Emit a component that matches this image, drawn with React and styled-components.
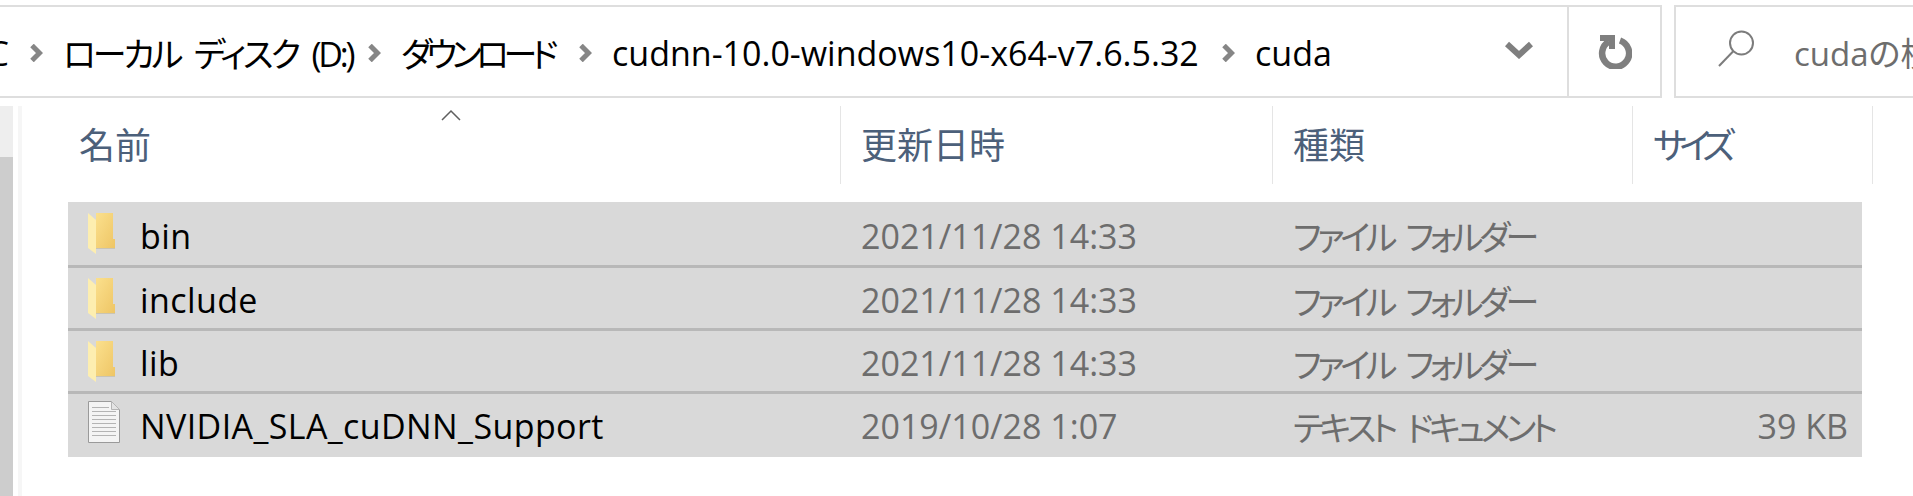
import styled, { createGlobalStyle } from "styled-components";

const GlobalStyle = createGlobalStyle`
  html, body {
    margin: 0;
    padding: 0;
    background: #fff;
  }
  body {
    font-family: "Open Sans", "Noto Sans CJK JP", sans-serif;
    font-feature-settings: "palt";
  }
`;

const crumbs = [
  { label: "ローカル ディスク (D:)", width: 304, tracking: -3.2 },
  { label: "ダウンロード", width: 177, tracking: -5.6 },
  { label: "cudnn-10.0-windows10-x64-v7.6.5.32", width: 609, tracking: 0 },
  { label: "cuda", width: 80, tracking: 0 },
];

const files = [
  { name: "bin", date: "2021/11/28 14:33", type: "ファイル フォルダー", folder: true, tall: true },
  { name: "include", date: "2021/11/28 14:33", type: "ファイル フォルダー", folder: true },
  { name: "lib", date: "2021/11/28 14:33", type: "ファイル フォルダー", folder: true },
  { name: "NVIDIA_SLA_cuDNN_Support", date: "2019/10/28 1:07", type: "テキスト ドキュメント", size: "39 KB", tall: true },
];

const Chevron = () => (
  <ChevronSvg width="14" height="18" viewBox="0 0 14 18">
    <path d="M3 1.5L10.5 9 3 16.5" fill="none" stroke="#868686" strokeWidth="5" />
  </ChevronSvg>
);

const FolderIcon = () => (
  <svg width="28" height="41" viewBox="0 0 28 41">
    <defs>
      <linearGradient id="back" x1="0" y1="0" x2="1" y2="1">
        <stop offset="0" stopColor="#fbe08d" />
        <stop offset="1" stopColor="#eec565" />
      </linearGradient>
    </defs>
    <path d="M8 0h17v26l2 0v9H8z" fill="url(#back)" />
    <path d="M0 0l8 7v34l-8-6z" fill="#fdeeb0" />
    <path d="M8 35h19v1H8z" fill="#c9c4b4" />
  </svg>
);

const DocIcon = () => (
  <DocSvg width="32" height="42" viewBox="0 0 32 42">
    <path d="M.5.5h23l8 8v33H.5z" fill="#f4f4f4" stroke="#9a9a9a" />
    <path d="M23.5.5v8h8z" fill="#e4e4e4" stroke="#b5b5b5" />
    <path
      d="M4 6.5h17M4 10.5h24M4 14.5h24M4 18.5h24M4 22.5h24M4 26.5h24M4 30.5h24M4 34.5h24"
      stroke="#b4b4b4"
    />
  </DocSvg>
);

const RefreshIcon = () => (
  <svg width="34" height="34" viewBox="0 0 34 34">
    <path d="M11 6.5A13.5 13.5 0 1 0 22 5.5" fill="none" stroke="#7f7f7f" strokeWidth="6.5" />
    <path d="M2 0h15v14h-6V6H2z" fill="#7f7f7f" />
  </svg>
);

const SearchIcon = () => (
  <SearchSvg width="38" height="38" viewBox="0 0 38 38">
    <circle cx="24.5" cy="13" r="11.5" fill="none" stroke="#7c7c7c" strokeWidth="2" />
    <path d="M16.5 21L2 36" stroke="#7c7c7c" strokeWidth="2" />
  </SearchSvg>
);

export default function App() {
  return (
    <>
      <GlobalStyle />
      <Page>
        <TopBar>
          <AddressBar>
            <Breadcrumbs>
              <RootCrumb>PC</RootCrumb>
              {crumbs.map((crumb) => (
                <Crumb key={crumb.label}>
                  <Chevron />
                  <CrumbLabel $width={crumb.width} $tracking={crumb.tracking}>
                    {crumb.label}
                  </CrumbLabel>
                </Crumb>
              ))}
            </Breadcrumbs>
            <DropButton>
              <svg width="28" height="18" viewBox="0 0 28 18">
                <path d="M2 3l12 11L26 3" fill="none" stroke="#7f7f7f" strokeWidth="6" />
              </svg>
            </DropButton>
            <RefreshButton>
              <RefreshIcon />
            </RefreshButton>
          </AddressBar>
          <SearchBox>
            <SearchIcon />
            <SearchText>cudaの検索</SearchText>
          </SearchBox>
        </TopBar>
        <Main>
          <Sidebar />
          <Gutter />
          <List>
            <HeaderRow>
              <HeaderCell $width={773} $pad={11}>名前</HeaderCell>
              <HeaderCell $width={432} $pad={20}>更新日時</HeaderCell>
              <HeaderCell $width={360} $pad={20}>種類</HeaderCell>
              <HeaderCell $width={240} $pad={20} $tracking={-7.7}>サイズ</HeaderCell>
              <SortArrow width="20" height="12" viewBox="0 0 20 12">
                <path d="M1 11l9-9 9 9" fill="none" stroke="#5f5f5f" strokeWidth="1.5" />
              </SortArrow>
            </HeaderRow>
            <Rows>
              {files.map((file) => (
                <Row key={file.name} $tall={file.tall}>
                  <NameCell>
                    <IconSlot>{file.folder ? <FolderIcon /> : <DocIcon />}</IconSlot>
                    <FileName>{file.name}</FileName>
                  </NameCell>
                  <DetailCell $pad={20}>{file.date}</DetailCell>
                  <DetailCell $pad={20}>
                    <KanaText>{file.type}</KanaText>
                  </DetailCell>
                  <SizeCell>{file.size}</SizeCell>
                </Row>
              ))}
            </Rows>
          </List>
        </Main>
      </Page>
    </>
  );
}

const Page = styled.div`
  width: 1913px;
  height: 496px;
  overflow: hidden;
  background: #fff;
`;

const TopBar = styled.div`
  display: flex;
  gap: 12px;
  height: 93px;
  padding-top: 5px;
`;

const AddressBar = styled.div`
  display: flex;
  flex: 0 0 1662px;
  box-sizing: border-box;
  border: 2px solid #dedede;
  border-left: 0;
`;

const Breadcrumbs = styled.div`
  display: flex;
  flex: 1;
  align-items: center;
  overflow: hidden;
  padding-top: 2px;
  font-size: 34px;
  color: #000;
`;

const RootCrumb = styled.span`
  flex: none;
  width: 62px;
  margin-left: -33px;
  white-space: nowrap;
`;

const Crumb = styled.div`
  display: flex;
  flex: none;
  align-items: center;
`;

const ChevronSvg = styled.svg`
  flex: none;
  margin-right: 20px;
`;

const CrumbLabel = styled.span`
  display: block;
  width: ${(p) => p.$width}px;
  white-space: nowrap;
  letter-spacing: ${(p) => p.$tracking}px;
  word-spacing: 8px;
`;

const DropButton = styled.div`
  display: flex;
  flex: 0 0 62px;
  align-items: center;
  margin-top: -4px;
`;

const RefreshButton = styled.div`
  display: flex;
  flex: 0 0 93px;
  align-items: center;
  justify-content: center;
  border-left: 2px solid #dedede;
  box-sizing: border-box;
`;

const SearchBox = styled.div`
  display: flex;
  flex: 1;
  align-items: center;
  gap: 39px;
  box-sizing: border-box;
  padding-left: 41px;
  border: 2px solid #dedede;
  border-right: 0;
  overflow: hidden;
  white-space: nowrap;
`;

const SearchSvg = styled.svg`
  flex: none;
  margin-top: -6px;
`;

const SearchText = styled.span`
  flex: none;
  font-size: 33px;
  color: #6d6d6d;
`;

const Main = styled.div`
  display: flex;
  height: 390px;
  margin-top: 8px;
`;

const Sidebar = styled.div`
  flex: 0 0 13px;
  background: linear-gradient(#eeeeee 0, #eeeeee 51px, #cdcdcd 51px);
`;

const Gutter = styled.div`
  flex: 0 0 4px;
  margin-left: 5px;
  background: #f6f6f6;
`;

const List = styled.div`
  flex: 1;
  margin-left: 46px;
`;

const HeaderRow = styled.div`
  position: relative;
  display: flex;
  height: 78px;
`;

const HeaderCell = styled.div`
  flex: 0 0 ${(p) => p.$width}px;
  box-sizing: border-box;
  padding: 18px 0 0 ${(p) => p.$pad}px;
  border-right: 1px solid #e5e5e5;
  font-size: 36px;
  line-height: 44px;
  color: #4c607a;
  letter-spacing: ${(p) => p.$tracking || 0}px;
`;

const SortArrow = styled.svg`
  position: absolute;
  left: 373px;
  top: 3px;
`;

const Rows = styled.div`
  display: flex;
  flex-direction: column;
  gap: 3px;
  width: 1794px;
  margin-top: 18px;
`;

const Row = styled.div`
  display: grid;
  grid-template-columns: 773px 432px 360px 229px;
  align-items: center;
  box-sizing: border-box;
  height: ${(p) => (p.$tall ? 63 : 60)}px;
  background: #d9d9d9;
  font-size: 34px;
  box-shadow: 0 3px 0 #b8b8b8;
  &:last-child {
    padding-bottom: 3px;
    box-shadow: none;
  }
`;

const NameCell = styled.div`
  display: flex;
  align-items: center;
  padding-left: 20px;
`;

const IconSlot = styled.div`
  display: flex;
  flex: 0 0 52px;
`;

const DocSvg = styled.svg`
  margin-top: -4px;
`;

const FileName = styled.span`
  margin-top: 4px;
  color: #000;
  white-space: nowrap;
  letter-spacing: 0.4px;
`;

const DetailCell = styled.div`
  padding: 4px 0 0 ${(p) => p.$pad}px;
  color: #6d6d6d;
  white-space: nowrap;
`;

const KanaText = styled.span`
  letter-spacing: -4.4px;
  word-spacing: 8px;
`;

const SizeCell = styled.div`
  padding: 4px 14px 0 0;
  text-align: right;
  color: #6d6d6d;
`;
